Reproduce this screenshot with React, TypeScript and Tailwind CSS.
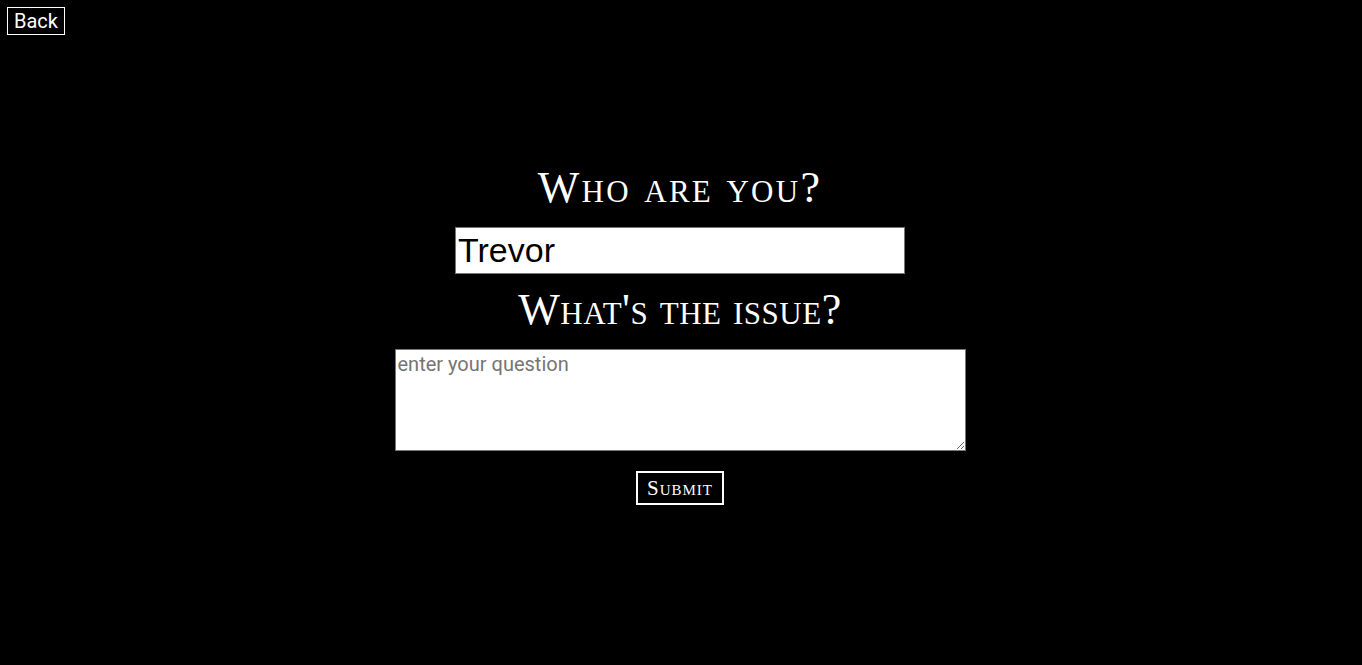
import { useState } from "react";

const heading =
  "text-white text-[44px] leading-none [font-variant:small-caps] [font-family:'Liberation_Serif',serif]";

export default function App() {
  const [name, setName] = useState("Trevor");
  const [question, setQuestion] = useState("");

  return (
    <div className="h-screen bg-black flex flex-col">
      <div>
        <button className="m-[7px] px-[6px] py-[1px] border border-white bg-black text-white text-[20px] leading-[24px] [font-family:Roboto,sans-serif]">
          Back
        </button>
      </div>

      <div className="flex flex-col items-center pt-[124px] -translate-x-[1px]">
        <h1 className={heading + " tracking-[2.3px]"}>Who are you?</h1>
        <input
          value={name}
          onChange={(e) => setName(e.target.value)}
          className="mt-[17px] w-[450px] h-[47px] px-[2px] border border-[#767676] bg-white text-black text-[34px] outline-none [font-family:'Liberation_Sans',Arial,sans-serif]"
        />
        <h2 className={heading + " mt-[14px] tracking-[0.5px]"}>What's the issue?</h2>
        <textarea
          value={question}
          onChange={(e) => setQuestion(e.target.value)}
          placeholder="enter your question"
          className="mt-[17px] w-[571px] h-[102px] px-[2px] pt-[2px] pb-[1px] border border-[#767676] bg-white text-black text-[20px] leading-[24px] placeholder:text-[#757575] outline-none [font-family:Roboto,sans-serif]"
        />
        <button className="mt-[20px] w-[88px] h-[34px] border-2 border-white bg-black text-white text-[21px] tracking-[1px] [font-variant:small-caps] [font-family:'Liberation_Serif',serif]">
          Submit
        </button>
      </div>
    </div>
  );
}
